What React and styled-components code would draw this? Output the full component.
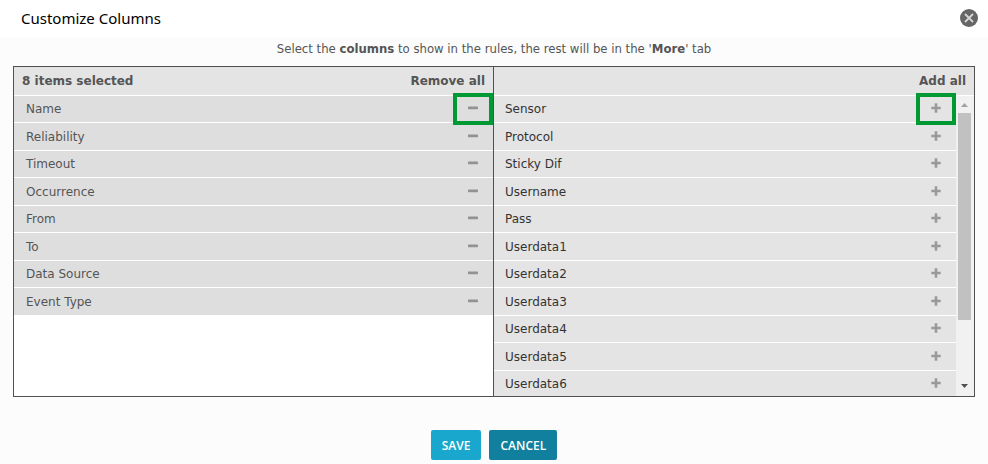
import React, { useState } from 'react'
import styled, { createGlobalStyle } from 'styled-components'

const colors = {
  text: '#555555',
  dark: '#333333',
  icon: '#999999',
  line: '#505050',
  page: '#fcfcfc',
  panel: '#e4e4e4',
  selected: '#dedede',
  save: '#1aa7cd',
  cancel: '#117f9e',
  highlight: '#009933',
}

const initSelected = ['Name', 'Reliability', 'Timeout', 'Occurrence', 'From', 'To', 'Data Source', 'Event Type']
const initAvailable = ['Sensor', 'Protocol', 'Sticky Dif', 'Username', 'Pass', 'Userdata1', 'Userdata2', 'Userdata3', 'Userdata4', 'Userdata5', 'Userdata6']

const MinusIcon = () => <svg width="10" height="10" viewBox="0 0 10 10" aria-hidden="true">
  <rect x="0" y="3.6" width="10" height="2.6" rx="0.6" fill="#929292" />
</svg>

const PlusIcon = () => <svg width="10" height="10" viewBox="0 0 10 10" aria-hidden="true">
  <path d="M3.7 0.3h2.6v3.4h3.4v2.6H6.3v3.4H3.7V6.3H0.3V3.7h3.4z" fill={colors.icon} />
</svg>

const CloseIcon = () => <svg width="18" height="18" viewBox="0 0 18 18" aria-hidden="true">
  <circle cx="9" cy="9" r="9" fill="#666666" />
  <path d="M5 5l8 8M13 5l-8 8" stroke="#d6d6d6" strokeWidth="1.8" />
</svg>

export default () => {
  const [selected, setSelected] = useState(initSelected)
  const [available, setAvailable] = useState(initAvailable)

  const remove = (name) => {
    setSelected(selected.filter(item => item !== name))
    setAvailable([...available, name])
  }

  const add = (name) => {
    setAvailable(available.filter(item => item !== name))
    setSelected([...selected, name])
  }

  const removeAll = () => {
    setAvailable([...available, ...selected])
    setSelected([])
  }

  const addAll = () => {
    setSelected([...selected, ...available])
    setAvailable([])
  }

  return <>
    <GlobalStyle />
    <Header>
      <Title>Customize Columns</Title>
      <CloseButton type="button" aria-label="Close"><CloseIcon /></CloseButton>
    </Header>
    <Main>
      <Hint>Select the <b>columns</b> to show in the rules, the rest will be in the '<b>More</b>' tab</Hint>
      <Picker>
        <Column>
          <ColumnHead>
            <span>{selected.length} items selected</span>
            <TextButton type="button" onClick={removeAll}>Remove all</TextButton>
          </ColumnHead>
          <ListArea>
            <List>
              {selected.map((name, i) => <Row key={name} $selected>
                {name}
                <RowButton type="button" aria-label={`Remove ${name}`} onClick={() => remove(name)}>
                  <MinusIcon />
                  {i === 0 && <Highlight />}
                </RowButton>
              </Row>)}
            </List>
          </ListArea>
        </Column>
        <Column>
          <ColumnHead>
            <span />
            <TextButton type="button" onClick={addAll}>Add all</TextButton>
          </ColumnHead>
          <ListArea>
            <List>
              {available.map((name, i) => <Row key={name}>
                {name}
                <RowButton type="button" aria-label={`Add ${name}`} onClick={() => add(name)}>
                  <PlusIcon />
                  {i === 0 && <Highlight />}
                </RowButton>
              </Row>)}
            </List>
            <Scrollbar aria-hidden="true">
              <svg width="7" height="4" viewBox="0 0 7 4"><path d="M0 4L3.5 0L7 4z" fill="#a3a3a3" /></svg>
              <Thumb />
              <svg width="7" height="4" viewBox="0 0 7 4"><path d="M0 0L3.5 4L7 0z" fill={colors.line} /></svg>
            </Scrollbar>
          </ListArea>
        </Column>
      </Picker>
      <Actions>
        <ActionButton type="button" $color={colors.save}>SAVE</ActionButton>
        <ActionButton type="button" $color={colors.cancel}>CANCEL</ActionButton>
      </Actions>
    </Main>
  </>
}

const GlobalStyle = createGlobalStyle`
  * {
    box-sizing: border-box;
  }
  body {
    margin: 0;
    background-color: ${ colors.page };
    color: ${ colors.text };
    font-family: "DejaVu Sans", Verdana, sans-serif;
    font-size: 12px;
  }
  button {
    padding: 0;
    border: 0;
    background: none;
    color: inherit;
    font: inherit;
    cursor: pointer;
  }
  svg {
    display: block;
  }
`

const Header = styled.header`
  display: flex;
  align-items: center;
  justify-content: space-between;
  padding: 0 10px 1px 21px;
  background-color: white;
`

const Title = styled.h1`
  margin: 0;
  color: black;
  font-family: "Noto Sans", "Open Sans", sans-serif;
  font-size: 15px;
  font-weight: 400;
  line-height: 36px;
`

const CloseButton = styled.button`
  width: 18px;
  height: 18px;
`

const Main = styled.main`
  padding: 0 13px;
`

const Hint = styled.p`
  margin: 0;
  padding: 2px 0 7px;
  font-family: "DejaVu Sans Condensed", "DejaVu Sans", sans-serif;
  font-size: 13px;
  line-height: 20px;
  text-align: center;
`

const Picker = styled.div`
  display: grid;
  grid-template-columns: 1fr 1fr;
  border: 1px solid ${ colors.line };
  background-color: white;
  overflow: hidden;
`

const Column = styled.section`
  min-width: 0;
  &:first-child {
    border-right: 1px solid ${ colors.line };
  }
`

const ColumnHead = styled.div`
  display: flex;
  align-items: center;
  justify-content: space-between;
  height: 29px;
  padding: 0 8px;
  border-bottom: 1px solid white;
  background-color: ${ colors.panel };
  font-weight: 700;
`

const TextButton = styled.button`
  font-weight: 700;
`

const ListArea = styled.div`
  display: flex;
  height: 300px;
`

const List = styled.ul`
  flex: 1;
  margin: 0;
  padding: 0;
  list-style: none;
`

const Row = styled.li`
  display: flex;
  align-items: center;
  justify-content: space-between;
  height: 27px;
  padding-left: ${ ({$selected}) => $selected ? "12px" : "11px" };
  border-bottom: 1px solid white;
  background-color: ${ ({$selected}) => $selected ? colors.selected : colors.panel };
  color: ${ ({$selected}) => $selected ? colors.text : colors.dark };
  line-height: 26px;
  &:nth-child(even) {
    height: 28px;
  }
`

const RowButton = styled.button`
  position: relative;
  display: flex;
  align-items: center;
  justify-content: center;
  align-self: stretch;
  width: 40px;
  padding-bottom: 2px;
`

const Highlight = styled.span`
  position: absolute;
  inset: -3px 0;
  border: 4px solid ${ colors.highlight };
`

const Scrollbar = styled.div`
  display: flex;
  flex-direction: column;
  align-items: center;
  justify-content: space-between;
  width: 18px;
  padding: 7px 3px 8px 2px;
  background-color: #f1f1f1;
`

const Thumb = styled.div`
  width: 13px;
  height: 207px;
  margin: 6px 0 auto;
  background-color: #c1c1c1;
`

const Actions = styled.div`
  display: flex;
  justify-content: center;
  gap: 8px;
  padding-top: 33px;
`

const ActionButton = styled.button`
  height: 30px;
  padding: 0 11px;
  border-radius: 2px;
  background-color: ${ ({$color}) => $color };
  color: white;
  font-family: "Open Sans", sans-serif;
  font-size: 12px;
  font-weight: 600;
`
